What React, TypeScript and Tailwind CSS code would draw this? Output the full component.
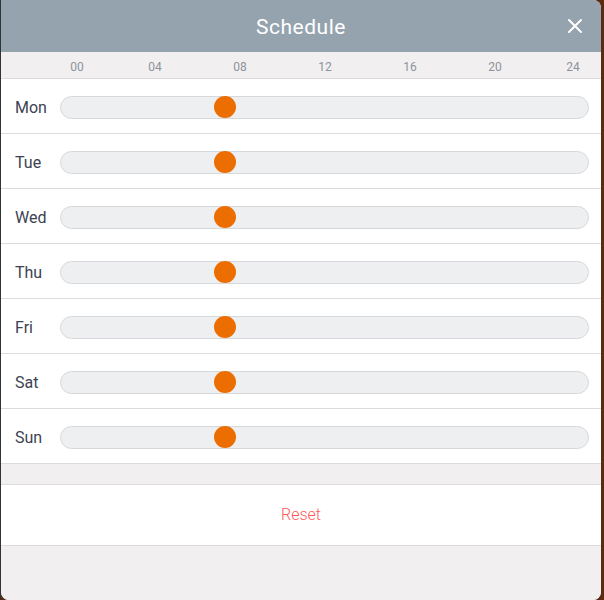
import { X } from "lucide-react";

const days = ["Mon", "Tue", "Wed", "Thu", "Fri", "Sat", "Sun"];

function DayRow({ day }: { day: string }) {
  return (
    <div className="flex h-[55px] items-center border-b border-[#dcdcdc] bg-white pt-[3px]">
      <span className="w-[59px] pl-[14px] text-[16px] text-[#3c4252]">{day}</span>
      <div className="relative h-[23px] w-[529px] rounded-full border border-[#d6d8db] bg-[#eeeff1]">
        {/* handle at ~07:00 */}
        <div className="absolute left-[153px] top-[-1px] h-[22px] w-[22px] rounded-full bg-[#ec6d00]" />
      </div>
    </div>
  );
}

export default function App() {
  return (
    <div className="flex h-[600px] w-[604px] bg-[#5a2a12] font-['Roboto',sans-serif]">
      <div className="w-px bg-[#2e3438]" />
      <div className="flex w-[600px] flex-col overflow-hidden rounded-tr-lg rounded-b-lg bg-[#f1eff0]">
        <header className="relative flex h-[52px] items-center justify-center bg-[#95a3af] pt-[3px]">
          <h2 className="text-[21px] font-normal tracking-wide text-white">Schedule</h2>
          <button className="absolute right-[14px] top-[14px] text-white">
            <X size={24} strokeWidth={2} />
          </button>
        </header>

        <div className="flex h-[27px] items-center border-b border-[#dcdcdc] bg-[#f1eff0] pl-[60px] pt-[3px] text-[12px] text-[#8c939c]">
          <span className="w-[32px] text-center">00</span>
          <span className="ml-[46px] w-[32px] text-center">04</span>
          <span className="ml-[53px] w-[32px] text-center">08</span>
          <span className="ml-[53px] w-[32px] text-center">12</span>
          <span className="ml-[53px] w-[32px] text-center">16</span>
          <span className="ml-[53px] w-[32px] text-center">20</span>
          <span className="ml-[46px] w-[32px] text-center">24</span>
        </div>

        {days.map((d) => (
          <DayRow key={d} day={d} />
        ))}

        <div className="h-[21px] border-b border-[#dcdcdc] bg-[#f1eff0]" />

        <button className="flex h-[61px] items-center justify-center border-b border-[#dcdcdc] bg-white text-[16px] font-light text-[#ff5a5a]">
          Reset
        </button>

        <div className="flex-1 bg-[#f1eff0]" />
      </div>
    </div>
  );
}
